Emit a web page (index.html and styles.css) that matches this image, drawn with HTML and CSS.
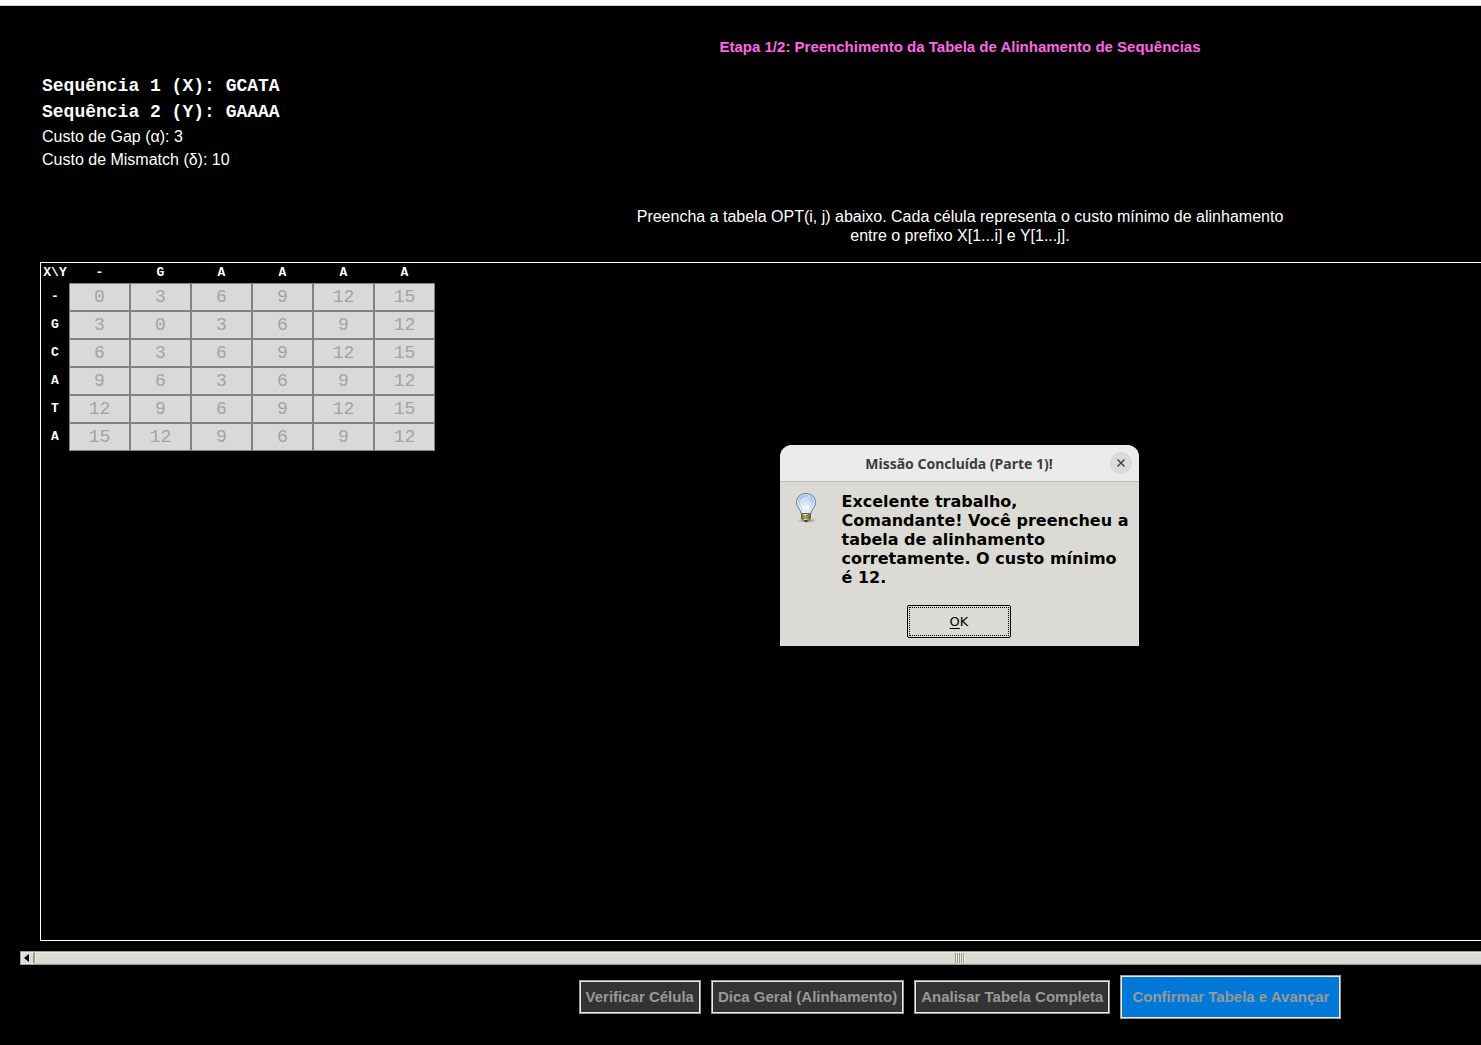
FILE: index.html
```html
<!DOCTYPE html>
<html lang="pt-BR">
<head>
<meta charset="utf-8">
<title>Alinhamento de Sequências</title>
<link rel="stylesheet" href="styles.css">
</head>
<body>
<div class="app">
  <div class="window-edge"></div>
  <main class="stage">
    <h1 class="title">Etapa 1/2: Preenchimento da Tabela de Alinhamento de Sequências</h1>
    <section class="info">
      <p class="sequence">Sequência 1 (X): GCATA</p>
      <p class="sequence">Sequência 2 (Y): GAAAA</p>
      <p class="cost">Custo de Gap (α): 3</p>
      <p class="cost">Custo de Mismatch (δ): 10</p>
    </section>
    <p class="instructions">Preencha a tabela OPT(i, j) abaixo. Cada célula representa o custo mínimo de alinhamento<br>entre o prefixo X[1...i] e Y[1...j].</p>
    <section class="canvas">
      <table class="grid">
        <thead>
          <tr><th class="corner">X\Y</th><th>-</th><th>G</th><th>A</th><th>A</th><th>A</th><th>A</th></tr>
        </thead>
        <tbody id="rows"></tbody>
      </table>
    </section>
    <div class="scrollbar">
      <button class="arrow" type="button" aria-label="Rolar para a esquerda">
        <svg width="5" height="8" viewBox="0 0 5 8"><path d="M5 0v8L0 4z" fill="#000"/></svg>
      </button>
      <div class="thumb"><span class="grip"></span></div>
    </div>
    <div class="actions">
      <button class="action" type="button" disabled>Verificar Célula</button>
      <button class="action" type="button" disabled>Dica Geral (Alinhamento)</button>
      <button class="action" type="button" disabled>Analisar Tabela Completa</button>
      <button class="action primary" type="button" disabled>Confirmar Tabela e Avançar</button>
    </div>
  </main>

  <div class="dialog" role="dialog" aria-labelledby="dialog-title">
    <header class="dialog-head">
      <h2 class="dialog-title" id="dialog-title">Missão Concluída (Parte 1)!</h2>
      <button class="close" type="button" aria-label="Fechar">
        <svg width="8" height="8" viewBox="0 0 8 8"><path d="M0.5 0.5l7 7M7.5 0.5l-7 7" stroke="#3d3d3d" stroke-width="1.4"/></svg>
      </button>
    </header>
    <div class="dialog-body">
      <svg class="bulb" width="32" height="32" viewBox="0 0 32 32">
        <defs>
          <radialGradient id="glass" cx="50%" cy="65%" r="65%">
            <stop offset="0" stop-color="#f1f5f8"/><stop offset=".5" stop-color="#cbdcf0"/><stop offset="1" stop-color="#8db3e6"/>
          </radialGradient>
          <radialGradient id="shade"><stop offset="0" stop-color="#55554f" stop-opacity=".7"/><stop offset="1" stop-color="#55554f" stop-opacity="0"/></radialGradient>
          <linearGradient id="brass"><stop offset="0" stop-color="#78773b"/><stop offset=".4" stop-color="#f0efb5"/><stop offset="1" stop-color="#66652f"/></linearGradient>
        </defs>
        <ellipse cx="17" cy="28.500" rx="10" ry="2.500" fill="url(#shade)"/>
        <path d="M16 1.500C10.300 1.500 6.500 5.400 6.500 10.500C6.500 15.500 10.500 17 11.500 22H20.500C21.500 17 25.500 15.500 25.500 10.500C25.500 5.400 21.700 1.500 16 1.500z" fill="url(#glass)" stroke="#6b7585"/>
        <path d="M16 2.500C11 2.500 7.500 6 7.500 10.500C7.500 15 11.500 16.500 12.500 21H19.500C20.500 16.500 24.500 15 24.500 10.500C24.500 6 21 2.500 16 2.500z" fill="none" stroke="#eef5fc" stroke-opacity=".8"/>
        <path d="M10 11Q14 5 20 5" fill="none" stroke="#e2eefb" stroke-width="2" opacity=".6"/>
        <path d="M14.500 21L13 14l2 2 1-2 1 2 2-2-1.500 7" fill="none" stroke="#fff"/>
        <path d="M11.500 21.500h9v5l-2 2h-5l-2-2z" fill="url(#brass)" stroke="#65643b"/>
        <path d="M12 24.500l8-1M12 26.500l8-1" stroke="#65643b"/>
        <path d="M14 28.500h4l-1 1.500h-2z" fill="#34342b"/>
      </svg>
      <p class="message">Excelente trabalho, Comandante! Você preencheu a tabela de alinhamento corretamente. O custo mínimo é 12.</p>
    </div>
    <button class="ok" type="button"><span class="ok-face"><span class="key">O</span>K</span></button>
  </div>
</div>
<script src="script.js"></script>
</body>
</html>
```
FILE: script.js
```js
const labels = ["-", "G", "C", "A", "T", "A"];
const costs = [
  [0, 3, 6, 9, 12, 15],
  [3, 0, 3, 6, 9, 12],
  [6, 3, 6, 9, 12, 15],
  [9, 6, 3, 6, 9, 12],
  [12, 9, 6, 9, 12, 15],
  [15, 12, 9, 6, 9, 12]
];
document.getElementById("rows").innerHTML = costs.map((row, i) =>
  `<tr><th>${labels[i]}</th>${row.map((value, j) =>
    `<td><input class="cell" type="text" value="${value}" aria-label="OPT(${i}, ${j})" disabled></td>`
  ).join("")}</tr>`
).join("");
```
FILE: styles.css
```css
* { box-sizing: border-box; }

html { background: #000; }

body {
  margin: 0;
  background: #000;
  color: #fff;
  font: 16px/19px "Liberation Sans", Arial, sans-serif;
}

h1, h2, p { margin: 0; }

button, input { margin: 0; font: inherit; }

/* Centred items sit right of the middle, by this inset on their left side. */
.app {
  --inset: 419px;
  position: relative;
  display: flex;
  flex-direction: column;
  min-height: 100vh;
}

.window-edge {
  height: 6px;
  background: #fafafa;
  border-bottom: 1px solid #c9d3cb;
}

.stage {
  flex: 1;
  display: flex;
  flex-direction: column;
  padding: 32px 0 26px 20px;
}

.title {
  padding-left: var(--inset);
  color: #ff66e5;
  font-size: 15px;
  line-height: 18px;
  text-align: center;
}

.info { padding: 17px 22px 0; }

.sequence {
  font: bold 18px/26px "Liberation Mono", "Courier New", monospace;
}

.cost { line-height: 23px; }

.instructions {
  padding: 36px 0 17px var(--inset);
  text-align: center;
}

.canvas {
  flex: 1;
  margin-left: 20px;
  border: 1px solid #fff;
  border-right: 0;
}

.grid {
  border-collapse: collapse;
  font: bold 13px/20px "Liberation Mono", "Courier New", monospace;
}

.grid th, .grid td { padding: 0; text-align: center; }

.corner { width: 28px; }

.cell {
  display: block;
  width: 61px;
  height: 28px;
  padding: 0;
  border: 1px solid #828282;
  border-radius: 0;
  background: #d9d9d9;
  color: #a3a3a3;
  font: 18px/24px "Liberation Mono", "Courier New", monospace;
  text-align: center;
}

.scrollbar {
  display: flex;
  height: 14px;
  margin-top: 10px;
  border: 1px solid #9d998f;
  border-right: 0;
  background: #dcdad5;
}

.arrow {
  display: flex;
  align-items: center;
  justify-content: center;
  width: 14px;
  padding: 0 2px 0 0;
  border: 1px solid #eeebe7;
  border-right: 2px solid #9d998f;
  background: #dcdad5;
}

.thumb {
  flex: 1;
  display: flex;
  justify-content: center;
  padding-left: 402px;
  border-top: 1px solid #eeebe7;
  border-left: 1px solid #eeebe7;
  border-bottom: 1px solid #cfcdc8;
}

.grip {
  width: 10px;
  background: repeating-linear-gradient(to right, #9d998f 0 1px, #eeebe7 1px 2px);
}

.actions {
  display: flex;
  align-items: center;
  justify-content: center;
  gap: 10px;
  padding: 10px 0 0 var(--inset);
}

.action {
  height: 34px;
  padding: 0 6px 2px;
  border: 1px solid #9e9a90;
  box-shadow: inset 0 0 0 1px #eeebe7;
  background: #333;
  color: #999;
  font-size: 15px;
  font-weight: bold;
  white-space: nowrap;
}

.primary {
  height: 44px;
  padding: 0 11px 2px;
  background: #0078d7;
}

.dialog {
  position: absolute;
  top: 445px;
  left: calc(50% + 39px);
  width: 359px;
  padding-bottom: 8px;
  border-radius: 12px 12px 0 0;
  background: #dcdad5;
  color: #000;
}

.dialog-head {
  display: grid;
  grid-template-columns: 22px 1fr 22px;
  align-items: center;
  height: 37px;
  padding: 0 7px;
  border-bottom: 1px solid #bfbfbf;
  border-radius: 12px 12px 0 0;
  background: #ebebeb;
}

.dialog-title {
  grid-column: 2;
  padding-top: 2px;
  color: #3d3d3d;
  font: bold 14px/20px "Noto Sans", sans-serif;
  text-align: center;
}

.close {
  display: flex;
  align-items: center;
  justify-content: center;
  width: 22px;
  height: 22px;
  padding: 0;
  border: 0;
  border-radius: 50%;
  background: #dadada;
}

.dialog-body {
  display: flex;
  gap: 20px;
  padding: 10px 8px 18px 10px;
}

.bulb { flex: none; }

.message { font: bold 16px/19px "DejaVu Sans", sans-serif; }

.ok {
  display: block;
  width: 104px;
  height: 33px;
  margin: 0 auto;
  padding: 1px;
  border: 1px solid #000;
  border-radius: 2px;
  background: #dcdad5;
  color: #000;
}

.ok-face {
  display: block;
  height: 100%;
  border: 1px dotted #000;
  font: 13px/28px "DejaVu Sans", sans-serif;
}

.key { text-decoration: underline; text-underline-offset: 2px; }
```
